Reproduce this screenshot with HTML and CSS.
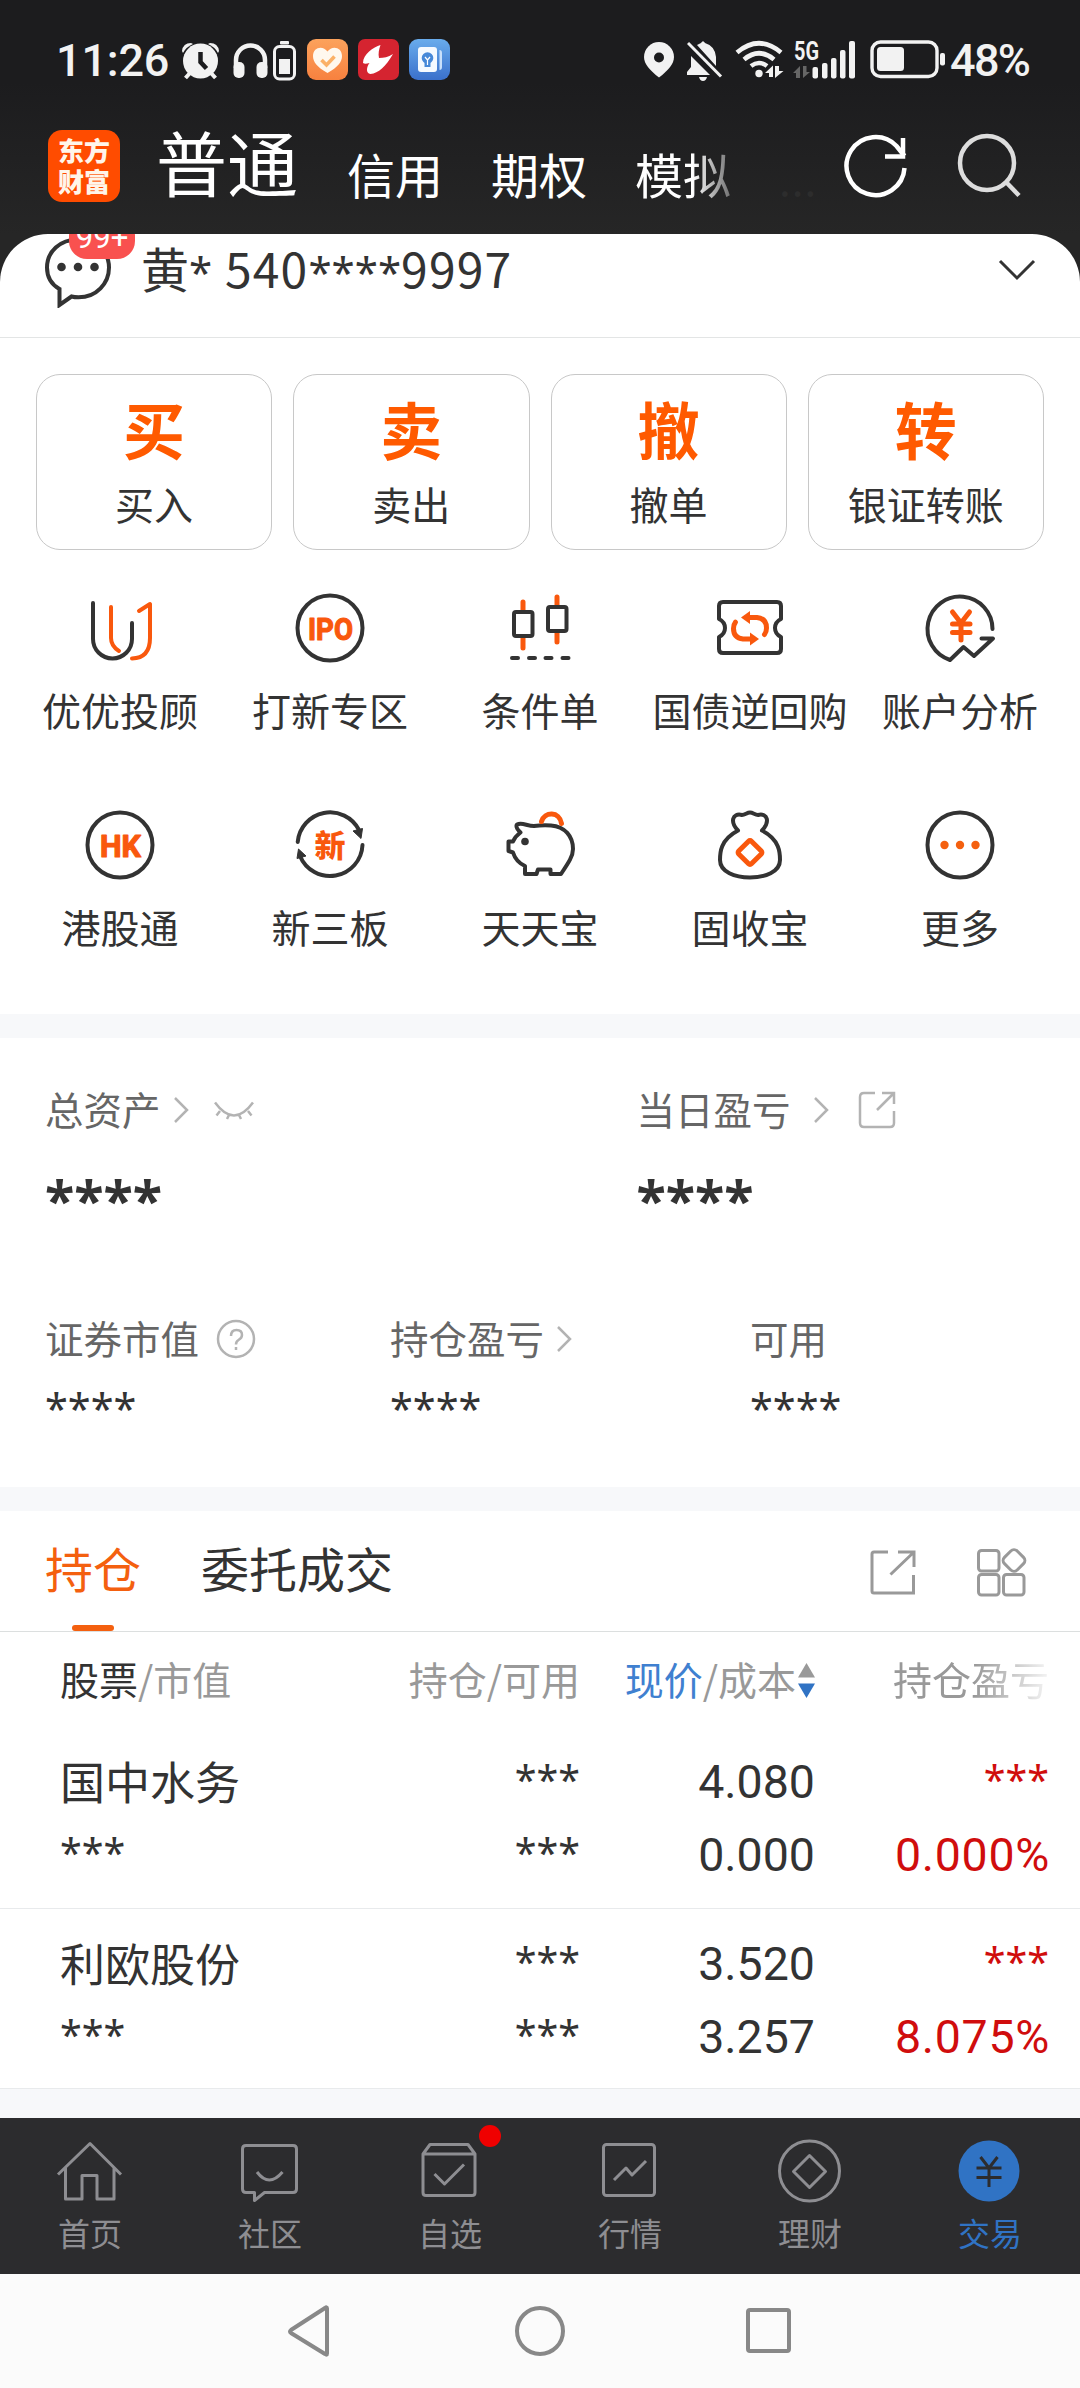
FILE: index.html
```html
<!DOCTYPE html>
<html lang="zh-CN">
<head>
<meta charset="utf-8">
<title>交易</title>
<link rel="stylesheet" href="styles.css">
</head>
<body>
<div class="screen">
  <header class="top">
    <div class="status">
      <span class="clock">11:26</span>
      <svg class="s-alarm" width="38" height="44" viewBox="182 38 38 44"><g fill="#f2f2f2"><circle cx="200.500" cy="61" r="17.500"/><path d="M182 51q1-8 9-8l2 1q-7 3-10 9zM219 51q-1-8-9-8l-2 1q7 3 10 9z"/></g><path d="M190 73l-4.500 5M211 73l4.500 5" stroke="#f2f2f2" stroke-width="4"/><path d="M200.500 52v10l6 6.500" fill="none" stroke="#1c1c1e" stroke-width="4.500"/></svg>
      <svg class="s-head" width="36" height="44" viewBox="233 38 36 44"><path d="M236 68v-8a14.500 14.500 0 0 1 29 0v8" fill="none" stroke="#f2f2f2" stroke-width="4.500"/><rect x="233.500" y="62" width="11" height="16" rx="5" fill="#f2f2f2"/><rect x="256.500" y="62" width="11" height="16" rx="5" fill="#f2f2f2"/></svg>
      <svg class="s-mini" width="24" height="44" viewBox="273 38 24 44"><rect x="280" y="41" width="9" height="3.500" rx="1" fill="#f2f2f2"/><rect x="274.500" y="46.500" width="20" height="32.500" rx="5" fill="none" stroke="#f2f2f2" stroke-width="3"/><rect x="279" y="59" width="11" height="15" fill="#f2f2f2"/></svg>
      <svg class="s-app1" width="42" height="44" viewBox="307 38 42 44"><defs><linearGradient id="orange" x2="0" y2="1"><stop stop-color="#fca25c"/><stop offset="1" stop-color="#f7813f"/></linearGradient><linearGradient id="blue" x2="0" y2="1"><stop stop-color="#69acec"/><stop offset="1" stop-color="#3a70cb"/></linearGradient></defs><rect x="307" y="39" width="41" height="41" rx="9" fill="url(#orange)"/><path d="M327.500 73C317 67 313 62 313 56c0-9 10-11 14.500-4.500C332 45 342 47 342 56c0 6-4 11-14.500 17z" fill="#fff8ee"/><path d="M321.500 60l5 5 8-8.500" fill="none" stroke="#fbb167" stroke-width="3.600"/></svg>
      <svg class="s-app" width="42" height="44" viewBox="358 38 42 44"><rect x="358" y="39" width="41" height="41" rx="7" fill="#d52430"/><path d="M380.500 45c-7 2-17.500 9-17.500 18 2 1.500 4 .5 6.500 0-3 4-4 10 1 11 8-1 15-7 22.500-20-5 3-9 4-14 4-1-4 0-9 1.500-13z" fill="#fff"/></svg>
      <svg class="s-app" width="42" height="44" viewBox="409 38 42 44"><rect x="409" y="39" width="41" height="41" rx="9" fill="url(#blue)"/><rect x="418" y="47" width="19" height="25" rx="3" fill="#f5faff"/><path d="M439.500 50q2.500 0 2.500 3v14q0 3-2.500 3z" fill="#c9e0fa"/><circle cx="427.500" cy="58" r="5.800" fill="#4789d8"/><rect x="424.500" y="62" width="6" height="5" fill="#4789d8"/><path d="M425 57l2.500 3 2.500-3M427.500 60v5" stroke="#fff" stroke-width="1.200" fill="none"/></svg>
      <span class="grow"></span>
      <svg width="31" height="44" viewBox="645 38 31 44"><path d="M660 77.500c-9-7-15-13.500-15-20.500a15 15 0 0 1 30 0c0 7-6 13.500-15 20.500z" fill="#f2f2f2"/><circle cx="660" cy="57.500" r="5" fill="#1c1c1e"/></svg>
      <svg class="s-bell" width="36" height="44" viewBox="688 38 36 44"><path d="M688 75v-3l4-5V56l19 19zM698 45l4-2q2-3.500 4 0 10 3 11 14v9zM700 77h8q-1 4-4 4t-4-4z" fill="#f2f2f2"/><path d="M689 43l33 33.500" stroke="#f2f2f2" stroke-width="3"/></svg>
      <svg class="s-wifi" width="49" height="44" viewBox="736 38 49 44"><g fill="none" stroke="#f2f2f2" stroke-width="4.600"><path d="M738 52.500q22-18.500 44 0M745 59.500q15-12.500 30 0M752 66q8-6 16 0"/></g><circle cx="760" cy="73.500" r="3.700" fill="#f2f2f2"/><path d="M766 73l8-7.500V77h-4v-4zM776 66l4 0v5h4.500l-8.500 7z" fill="#f2f2f2"/></svg>
      <svg class="s-cell" width="64" height="44" viewBox="794 38 64 44"><text class="t5g" x="795" y="59.500" textLength="25" lengthAdjust="spacingAndGlyphs">5G</text><path d="M794 73l7-7v12h-4v-5zM804 66v12l7-6h-3.500v-6z" fill="#666"/><g fill="#f2f2f2"><rect x="813.500" y="67" width="5.500" height="11.500" rx="2"/><rect x="823" y="63" width="5.500" height="15.500" rx="2"/><rect x="832" y="58" width="5.500" height="20.500" rx="2"/><rect x="841" y="50" width="5.500" height="28.500" rx="2"/><rect x="850" y="41" width="6" height="37.500" rx="2"/></g></svg>
      <svg class="s-batt" width="76" height="44" viewBox="871 38 76 44"><rect x="873" y="42" width="65" height="34.500" rx="8.500" fill="none" stroke="#f2f2f2" stroke-width="3.400"/><rect x="878" y="47" width="27" height="24" rx="3.500" fill="#f2f2f2"/><rect x="941" y="53" width="5" height="12.500" rx="2" fill="#f2f2f2"/></svg>
      <span class="pct">48%</span>
    </div>
    <nav class="accounts">
      <div class="logo">东方<br>财富</div>
      <span class="acc acc-on">普通</span>
      <span class="acc acc-a">信用</span>
      <span class="acc acc-b">期权</span>
      <span class="acc acc-c">模拟</span>
      <span class="faint">...</span>
      <svg class="refresh" width="66" height="70" viewBox="843 130 66 70"><path d="M904.500 168a29 29 0 1 1-8-22l8 10" fill="none" stroke="#fff" stroke-width="4.500"/><path d="M903 138v18.500h-18" fill="none" stroke="#fff" stroke-width="4.500"/></svg>
      <svg class="search" width="66" height="70" viewBox="956 130 66 70"><circle cx="987" cy="163" r="27" fill="none" stroke="#ddd" stroke-width="4.500"/><path d="M1006 182l13 13.500" stroke="#ddd" stroke-width="4.500"/></svg>
    </nav>
  </header>

  <section class="user">
    <svg class="msg" width="68" height="74" viewBox="44 234 68 74"><path d="M59.500 290.500v16l12-8.500q3 .8 7 .8c18 0 30.500-14 30.500-29.800s-13-28-31-28-31 12-31 28c0 10 4.500 17 12.500 21.500z" transform="translate(0 -1.500)" fill="none" stroke="#333" stroke-width="4"/><g fill="#333"><circle cx="61.500" cy="267" r="4.300"/><circle cx="78" cy="267" r="4.300"/><circle cx="94.500" cy="267" r="4.300"/></g></svg>
    <span class="badge">99+</span>
    <span class="uname">黄<i class="st">*</i> <span class="uid">540<i class="st">****</i>9997</span></span>
    <svg class="down" width="40" height="24" viewBox="997 257 40 24"><path d="M1000 261l17 17 17-17" fill="none" stroke="#333" stroke-width="3"/></svg>
  </section>

  <section class="actions">
    <div class="card"><b>买</b><span>买入</span></div>
    <div class="card"><b>卖</b><span>卖出</span></div>
    <div class="card"><b>撤</b><span>撤单</span></div>
    <div class="card"><b>转</b><span>银证转账</span></div>
  </section>

  <section class="grid">
    <div class="item"><svg viewBox="0 0 90 90"><path class="k" d="M18 20v36a19.500 19.500 0 0 0 39 0V40"/><path class="o" d="M36 24v31q0 8 8 13M64 28l11-7v34q0 20-18 20.500"/></svg><span>优优投顾</span></div>
    <div class="item"><svg viewBox="0 0 90 90"><circle class="k" cx="45" cy="45" r="32.500"/><text class="ic" x="23" y="56.500" textLength="45" lengthAdjust="spacingAndGlyphs">IPO</text></svg><span>打新专区</span></div>
    <div class="item"><svg viewBox="0 0 90 90"><path class="o w" d="M28 19v9M28 55v10M62 14v9M62 50v9"/><rect class="k" x="19" y="29" width="18.500" height="24" rx="2"/><rect class="k" x="53" y="24" width="18.500" height="24" rx="2"/><path class="k" d="M17 75h6M34 75h6M50.500 75h6M67.500 75h6"/></svg><span>条件单</span></div>
    <div class="item"><svg viewBox="0 0 90 90"><path class="k" d="M18 19h54q4 0 4 4v13q-6 3-6 9t6 9v12q0 4-4 4H18q-4 0-4-4V54q6-3 6-9t-6-9V23q0-4 4-4z"/><g id="cyc"><path class="o w" d="M42 34.500h10q9.500 1 9.500 10.500 0 4-2 6.500"/><path d="M36 34.500l9-6.500v13z" fill="#f9580d"/></g><use href="#cyc" transform="rotate(180 45 45.300)"/></svg><span>国债逆回购</span></div>
    <div class="item"><svg viewBox="0 0 90 90"><path class="k" d="M77.500 46a32.500 32.500 0 1 0-42.500 31L48.500 64 59 73 78 55.500H66.500"/><path class="o w" d="M37.500 29L46 40l8.500-11M46 40v17M37.500 41h17.500M37.500 49.500h17.500"/></svg><span>账户分析</span></div>
    <div class="item"><svg viewBox="0 0 90 90"><circle class="k" cx="45" cy="45" r="32.500"/><text class="ic" x="25" y="56.500" textLength="41" lengthAdjust="spacingAndGlyphs">HK</text></svg><span>港股通</span></div>
    <div class="item"><svg viewBox="0 0 90 90"><path class="k" d="M12.700 42A32.500 32.500 0 0 1 74 30M77.500 45A32.500 32.500 0 0 1 15 56"/><path d="M68 31l8 7.500 1.500-10zM12 58.500l1.500-9.500 7.500 7z" fill="#333" stroke="#333"/><text class="ic cn" x="29.500" y="56.500">新</text></svg><span>新三板</span></div>
    <div class="item"><svg viewBox="0 0 90 90"><path class="k" d="M25.500 32.500Q20 27 22 24.500c5-2.500 10 1.500 17 1.500q8-1 17-.5c14 1 22 11 22 23.500 0 7-4 13-12 25H55.500v-4.500H43L41.500 74H30v-8q-9-4-12-13.500l-4.500-1.500V41.500H18q2-5 7.500-9z"/><circle cx="30" cy="41.500" r="3.800" fill="#333"/><path class="o w" d="M46.500 21.500c3-10 18-10.500 20 2"/></svg><span>天天宝</span></div>
    <div class="item"><svg viewBox="0 0 90 90"><path class="k" d="M33 30.500C15 40 15 53 15 60c0 12 15 17.500 30 17.500S75 72 75 60c0-7 0-20-18-29.500 8-8 6-18-4-15.500-3 0-5-2.500-8-2.500S40 15 37 15c-10-2.500-12 7.500-4 15.500z"/><rect class="o w" x="36" y="43.500" width="18" height="18" rx="2" transform="rotate(45 45 52.500)"/></svg><span>固收宝</span></div>
    <div class="item"><svg viewBox="0 0 90 90"><circle class="k" cx="45" cy="45" r="32.500"/><g fill="#f4600f"><circle cx="29.500" cy="45" r="4.200"/><circle cx="45" cy="45" r="4.200"/><circle cx="60.500" cy="45" r="4.200"/></g></svg><span>更多</span></div>
  </section>

  <section class="assets">
    <div class="pair">
      <div class="cell">
        <div class="lab"><span>总资产</span><svg class="chev" width="16" height="28" viewBox="0 0 16 28"><path d="M2 2l12 12L2 26"/></svg><svg class="eye" width="40" height="22" viewBox="214 1102 40 22"><path d="M215 1105.500q19 26 38 0M220 1114l-3.500 4.500M229 1118l-2 4M239 1118l2 4M248 1114l3.500 4.500"/></svg></div>
        <div class="big">****</div>
      </div>
      <div class="cell">
        <div class="lab"><span>当日盈亏</span><svg class="chev chev-b" width="16" height="28" viewBox="0 0 16 28"><path d="M2 2l12 12L2 26"/></svg><svg class="exp" width="40" height="40" viewBox="0 0 40 40"><path d="M18 3H7Q3 3 3 7v26q0 4 4 4h26q4 0 4-4V21M25 3h12v11M37 3L20 20"/></svg></div>
        <div class="big">****</div>
      </div>
    </div>
    <div class="trio">
      <div class="cell"><div class="lab"><span>证券市值</span><svg class="q" width="40" height="40" viewBox="0 0 40 40"><circle cx="20" cy="20" r="18"/><path d="M15 17q0-6 5.500-6t5.500 5q0 3-3.500 5-2.500 1.500-2.500 4.500M20 28v3"/></svg></div><div class="val">****</div></div>
      <div class="cell"><div class="lab"><span>持仓盈亏</span><svg class="chev" width="16" height="28" viewBox="0 0 16 28"><path d="M2 2l12 12L2 26"/></svg></div><div class="val">****</div></div>
      <div class="cell"><div class="lab"><span>可用</span></div><div class="val">****</div></div>
    </div>
  </section>

  <section class="holdings">
    <div class="tabs">
      <span class="tab tab-on">持仓</span>
      <span class="tab">委托成交</span>
      <span class="grow"></span>
      <svg class="t-exp" width="50" height="50" viewBox="869 1547 50 50"><path d="M889 1552h-14q-2 0-2 2v37q0 2 2 2h39.500q0 0 0-2v-16M899 1552h16v15M915 1552l-23.500 22.500"/></svg>
      <svg class="t-grid" width="52" height="50" viewBox="977 1547 52 50"><rect x="979.500" y="1550.500" width="20.500" height="20.500" rx="3"/><rect x="979.500" y="1574.500" width="20.500" height="20.500" rx="3"/><rect x="1004.500" y="1574.500" width="20.500" height="20.500" rx="3"/><rect x="1006" y="1551.500" width="18" height="18" rx="4.500" transform="rotate(45 1015 1560.500)"/></svg>
    </div>
    <div class="row thead">
      <span><em class="dark">股票</em>/市值</span>
      <span>持仓/可用</span>
      <span class="price"><em class="act">现价</em>/成本<svg width="17" height="36" viewBox="0 0 17 36"><path d="M8.500 0L17 14.500H0z" fill="#999"/><path d="M8.500 35L17 20.500H0z" fill="#3073c4"/></svg></span>
      <span class="fade">持仓盈亏</span>
    </div>
    <div class="row stock">
      <span class="name">国中水务</span><span class="m">***</span><span class="n">4.080</span><span class="m red">***</span>
      <span class="m">***</span><span class="m">***</span><span class="n">0.000</span><span class="n p red">0.000%</span>
    </div>
    <div class="row stock">
      <span class="name">利欧股份</span><span class="m">***</span><span class="n">3.520</span><span class="m red">***</span>
      <span class="m">***</span><span class="m">***</span><span class="n">3.257</span><span class="n p red">8.075%</span>
    </div>
  </section>

  <nav class="bar">
    <div class="bi"><svg viewBox="53 2136 74 70"><path d="M58 2174.500l32-31 31 31M65.500 2168v31h16.500v-23.500h15V2199h17v-31"/></svg><span>首页</span></div>
    <div class="bi"><svg viewBox="233 2136 74 70"><path d="M246 2145.500h47q3.500 0 3.500 3.500v40q0 3.500-3.500 3.500h-28.500l-10 8v-8H246q-3.500 0-3.500-3.500v-40q0-3.500 3.500-3.500zM257 2172q12 16 25.500 0"/></svg><span>社区</span></div>
    <div class="bi"><svg viewBox="413 2136 74 70"><path d="M423 2154v38.500q0 3 3 3h46q3 0 3-3V2154l-7-9.500h-38zM423 2154h52M434.500 2174l10 10 19.500-19.500"/></svg><i class="dot"></i><span>自选</span></div>
    <div class="bi"><svg viewBox="593 2136 74 70"><rect x="603.500" y="2144.500" width="51" height="51" rx="3"/><path d="M614 2180l12-12 6 7 14-14"/></svg><span>行情</span></div>
    <div class="bi"><svg viewBox="773 2136 74 70"><circle cx="809.500" cy="2171" r="30"/><path d="M809.500 2155.500l16 16-16 16-16-16z"/></svg><span>理财</span></div>
    <div class="bi bi-on"><svg viewBox="953 2136 74 70"><circle cx="989" cy="2171" r="30.500" fill="#3073c4" stroke="none"/><path d="M980.500 2157l8.500 11 8.500-11M989 2168v19M976.500 2168h25M976.500 2177.500h25" stroke="#2c2c2e" stroke-width="3"/></svg><span>交易</span></div>
  </nav>

  <footer class="sys">
    <svg viewBox="280 2301 60 60"><path d="M327 2308.500v45q0 2-2 .5l-34-21q-2-1.500 0-3l34-22q2-1.500 2 .5z"/></svg>
    <svg viewBox="510 2301 60 60"><circle cx="540" cy="2331" r="23"/></svg>
    <svg viewBox="739 2301 60 60"><rect x="748" y="2310" width="41" height="41" rx="2"/></svg>
  </footer>
</div>
</body>
</html>
```
FILE: styles.css
```css
* { box-sizing: border-box; }
body { margin: 0; background: #f7f8fa; font-family: "Noto Sans CJK SC", sans-serif; color: #333; }
svg { display: block; flex: none; }
i, em { font-style: normal; }
.grow { flex: 1; }
.screen { width: 1080px; height: 2388px; overflow: hidden; display: flex; flex-direction: column; white-space: nowrap; }
.screen > * { flex: none; }

/* dark header */
.top { height: 234px; background: linear-gradient(#1c1c1e 35%, #262626); color: #fff; padding-top: 38px; }
.status { height: 44px; display: flex; padding: 0 46px 0 56px; color: #f2f2f2; font-family: Roboto, sans-serif; font-weight: 500; font-size: 45px; line-height: 46px; }
.clock { width: 126px; letter-spacing: -.2px; }
.s-head { margin-left: 13px; }
.s-mini { margin-left: 4px; }
.s-app1 { margin-left: 10px; }
.s-app { margin-left: 9px; }
.s-bell { margin-left: 12px; }
.s-wifi { margin-left: 12px; }
.s-cell { margin-left: 9px; overflow: visible; }
.s-batt { margin-left: 13px; }
.pct { width: 84px; margin-left: 4px; letter-spacing: -1.700px; }
.t5g { font: 700 25px Roboto, sans-serif; fill: #f2f2f2; }

.accounts { height: 152px; display: flex; align-items: flex-start; padding: 48px 58px 0 48px; }
.logo { width: 72px; height: 72px; border-radius: 14px; background: #ff4c00; padding-top: 4px; text-align: center; font-weight: 900; font-size: 26px; line-height: 31px; color: #fff5ea; }
.acc { font-size: 48px; line-height: 64px; margin-top: 11px; }
.acc-on { font-size: 71px; line-height: 80px; width: 144px; margin: -10px 0 0 36px; }
.acc-a { margin-left: 47px; }
.acc-b { margin-left: 48px; }
.acc-c { margin-left: 48px; -webkit-mask-image: linear-gradient(90deg, #000 60%, rgba(0,0,0,.35)); mask-image: linear-gradient(90deg, #000 60%, rgba(0,0,0,.35)); }
.faint { width: 40px; margin: 18px 0 0 48px; font-size: 42px; line-height: 60px; letter-spacing: 1px; color: #2d2d2d; }
.refresh { margin-left: auto; }
.search { margin-left: 47px; }

/* account strip */
.user { position: relative; height: 104px; overflow: hidden; background: linear-gradient(#262626 0 48px, #fff 48px); border-bottom: 1px solid #e3e5e5; display: flex; padding-left: 44px; isolation: isolate; }
.user::before { content: ""; position: absolute; inset: 0; border-radius: 48px 48px 0 0; background: #fff; z-index: -1; }
.badge { position: absolute; left: 69px; top: -16px; width: 66px; height: 41px; border-radius: 18px; background: #f9514f; color: #fff; font: 31px/39px Roboto, sans-serif; text-align: center; }
.uname { margin-left: 29px; font-size: 48px; line-height: 67px; }
.uid { letter-spacing: 1.200px; margin-left: 2px; }
.st { font-family: "Noto Sans", sans-serif; font-size: 42px; letter-spacing: 0; line-height: 1; }
.down { position: absolute; left: 997px; top: 23px; }

/* trade actions */
.actions { height: 213px; background: #fff; padding: 36px 36px 0; display: grid; grid-template-columns: repeat(4, 1fr); gap: 21px; }
.card { height: 176px; border: 1px solid #c8c8c8; border-radius: 24px; display: flex; flex-direction: column; align-items: center; }
.card b { font-weight: 700; font-size: 62px; line-height: 70px; margin-top: 18px; color: #ff5a00; }
.card span { font-size: 39px; line-height: 56px; margin-top: 12px; }

.grid { height: 463px; background: #fff; padding: 32px 15px 0; display: grid; grid-template-columns: repeat(5, 210px); grid-auto-rows: 217px; }
.item { display: flex; flex-direction: column; align-items: center; font-size: 39px; line-height: 56px; }
.item svg { width: 90px; height: 90px; margin-bottom: 8px; }
.k, .o { fill: none; stroke-width: 4; stroke-linecap: round; stroke-linejoin: round; }
.k { stroke: #333; }
.o { stroke: #f9580d; }
.w { stroke-width: 5; }
.ic { font: 700 32px Roboto, sans-serif; fill: #f9580d; stroke: #f9580d; stroke-width: 1.200; stroke-linejoin: round; }
.ic.cn { font: 900 31px "Noto Sans CJK SC", sans-serif; stroke: none; }

/* assets */
.assets { margin-top: 24px; height: 449px; background: #fff; padding: 44px 0 0 45px; }
.assets svg { fill: none; stroke: #b3b3b3; stroke-width: 2.500; }
.pair { display: grid; grid-template-columns: 591.500px 1fr; height: 229px; }
.trio { display: grid; grid-template-columns: 345px 360px 1fr; }
.lab { display: flex; align-items: center; height: 56px; font-size: 38.500px; color: #666; }
.lab > span { line-height: 52px; margin-bottom: 5px; }
.chev { margin-left: 12px; }
.chev-b { margin-left: 22px; }
.eye { margin-left: 25px; }
.exp { margin-left: 28px; }
.assets .q { margin-left: 17px; }
.big, .val { font-family: "Noto Sans", sans-serif; }
.big { font-weight: 700; font-size: 54px; line-height: 74px; margin-top: 24px; }
.val { font-size: 41.500px; line-height: 58px; margin-top: 12px; }

/* holdings */
.holdings { margin-top: 24px; height: 578px; background: #fff; border-bottom: 1px solid #e8eaec; }
.tabs { height: 121px; border-bottom: 1px solid #dcdfdf; display: flex; padding: 0 52px 0 45px; }
.tabs svg { fill: none; stroke: #999; stroke-width: 3; margin-top: 36px; }
.tab { font-size: 48px; line-height: 113px; margin-right: 60px; }
.tab-on { position: relative; color: #f4600f; }
.tab-on::after { content: ""; position: absolute; left: 27px; bottom: 0; width: 42px; height: 6px; border-radius: 3px; background: #f4600f; }
.t-grid { margin-left: 58px; }
.row { display: grid; grid-template-columns: 300px 220px 235px 234px; padding-left: 60px; }
.row > :nth-child(4n+2), .row > :nth-child(4n+3), .row > :nth-child(4n+4) { text-align: right; }
.thead { height: 95px; align-items: center; font-size: 39px; color: #999; }
.thead > span { line-height: 90px; margin-top: -4px; }
.dark { color: #333; }
.act { color: #3f80d0; }
.price { display: flex; justify-content: flex-end; align-items: center; }
.price svg { margin: 6px 0 0 2px; }
.fade { -webkit-mask-image: linear-gradient(90deg, #000 68%, rgba(0,0,0,.1)); mask-image: linear-gradient(90deg, #000 68%, rgba(0,0,0,.1)); }
.stock { height: 181px; padding-top: 19px; grid-auto-rows: 73px; }
.stock + .stock { border-top: 1px solid #e8eaec; }
.stock > span { line-height: 73px; }
.stock > .name { font-size: 45px; line-height: 69px; }
.n { font-family: Roboto, sans-serif; font-size: 46.500px; }
.p { letter-spacing: .7px; margin-right: -1px; }
.stock > .m { font-family: "Noto Sans", sans-serif; font-size: 39.500px; line-height: 67px; }
.red { color: #d00d0d; }

/* tab bar */
.bar { margin-top: 29px; height: 156px; background: #2c2c2e; display: grid; grid-template-columns: repeat(6, 180px); }
.bi { position: relative; display: flex; flex-direction: column; align-items: center; padding-top: 18px; font-size: 32px; line-height: 46px; color: #8e8e92; }
.bi svg { width: 74px; height: 70px; margin-bottom: 3px; fill: none; stroke: #8e8e92; stroke-width: 3; stroke-linejoin: round; }
.bi-on { color: #3073c4; }
.dot { position: absolute; left: 119px; top: 7px; width: 22px; height: 22px; border-radius: 50%; background: #f00000; }

.sys { height: 114px; background: #fbfbfb; display: flex; justify-content: space-between; padding: 27px 281px 0 280px; }
.sys svg { width: 60px; height: 60px; fill: none; stroke: #888; stroke-width: 4; }
```
